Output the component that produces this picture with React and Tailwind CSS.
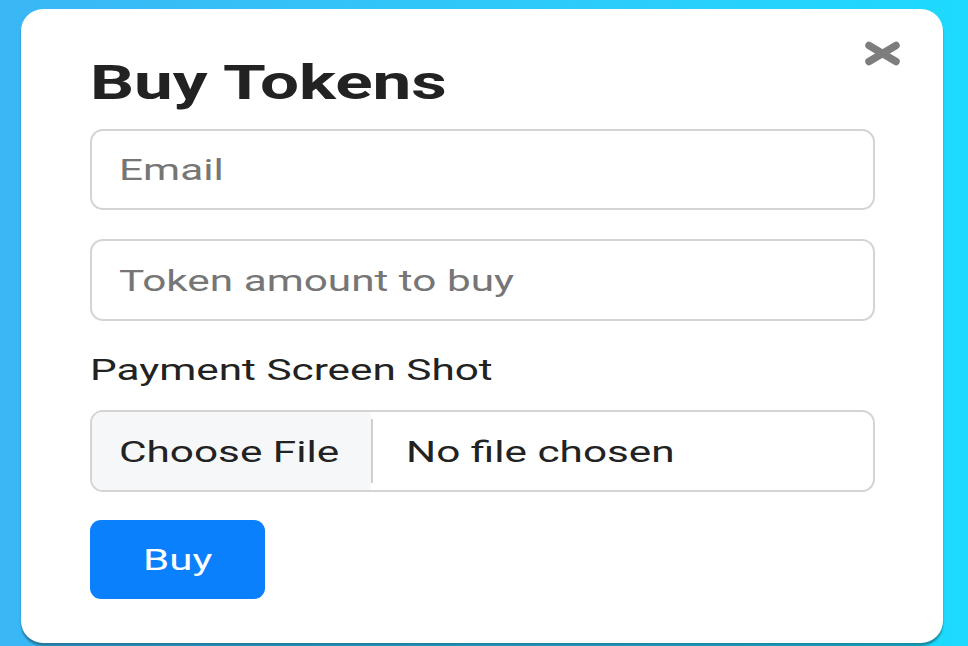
export default function App() {
  const font = { fontFamily: "Roboto, 'Liberation Sans', Arial, sans-serif" };
  return (
    <div
      className="w-full h-[646px] overflow-hidden bg-linear-to-r from-[#3ab7f5] to-[#1ddafc] pt-[9px] pl-[21px]"
      style={font}
    >
      <div className="relative w-[922px] h-[634px] bg-white rounded-[22px] shadow-[0_3px_2px_rgba(0,0,0,0.35)] pl-[69px] pt-[50px]">
        <button className="absolute left-[843px] top-[32px] w-[37px] h-[25px]">
          <svg viewBox="0 0 37 25" width="37" height="25">
            <path d="M5 4.5 L32 20.5 M32 4.5 L5 20.5" stroke="#7d7d7d" strokeWidth="7.5" strokeLinecap="round" />
          </svg>
        </button>
        <div className="h-[48px] leading-[48px] text-[48px] font-bold text-[#222]">
          <span className="inline-block origin-left scale-x-[1.44]">Buy Tokens</span>
        </div>
        <div className="mt-[22px] w-[785px] h-[81px] border-2 border-[#d4d4d4] rounded-[13px] flex items-center pl-[27px]">
          <span className="inline-block origin-left scale-x-[1.41] text-[30px] text-[#767676]">Email</span>
        </div>
        <div className="mt-[29px] w-[785px] h-[82px] border-2 border-[#d4d4d4] rounded-[13px] flex items-center pl-[27px]">
          <span className="inline-block origin-left scale-x-[1.41] text-[30px] text-[#767676]">Token amount to buy</span>
        </div>
        <div className="mt-[31px] h-[36px] leading-[36px] text-[30px] text-[#222]">
          <span className="inline-block origin-left scale-x-[1.41]">Payment Screen Shot</span>
        </div>
        <div className="mt-[22px] w-[785px] h-[82px] border-2 border-[#d4d4d4] rounded-[13px] flex items-stretch overflow-hidden">
          <div className="w-[279px] bg-[#f6f7f8] flex items-center pl-[27px]">
            <span className="inline-block origin-left scale-x-[1.41] text-[30px] text-[#222]">Choose File</span>
          </div>
          <div className="w-[2px] my-[7px] bg-[#cfcfcf]"></div>
          <div className="flex items-center pl-[33px]">
            <span className="inline-block origin-left scale-x-[1.41] text-[30px] text-[#222]">No file chosen</span>
          </div>
        </div>
        <button className="mt-[28px] w-[175px] h-[79px] rounded-[11px] bg-[#0a80fc] flex items-center justify-center">
          <span className="inline-block origin-center scale-x-[1.4] text-[30px] text-white">Buy</span>
        </button>
      </div>
    </div>
  );
}
